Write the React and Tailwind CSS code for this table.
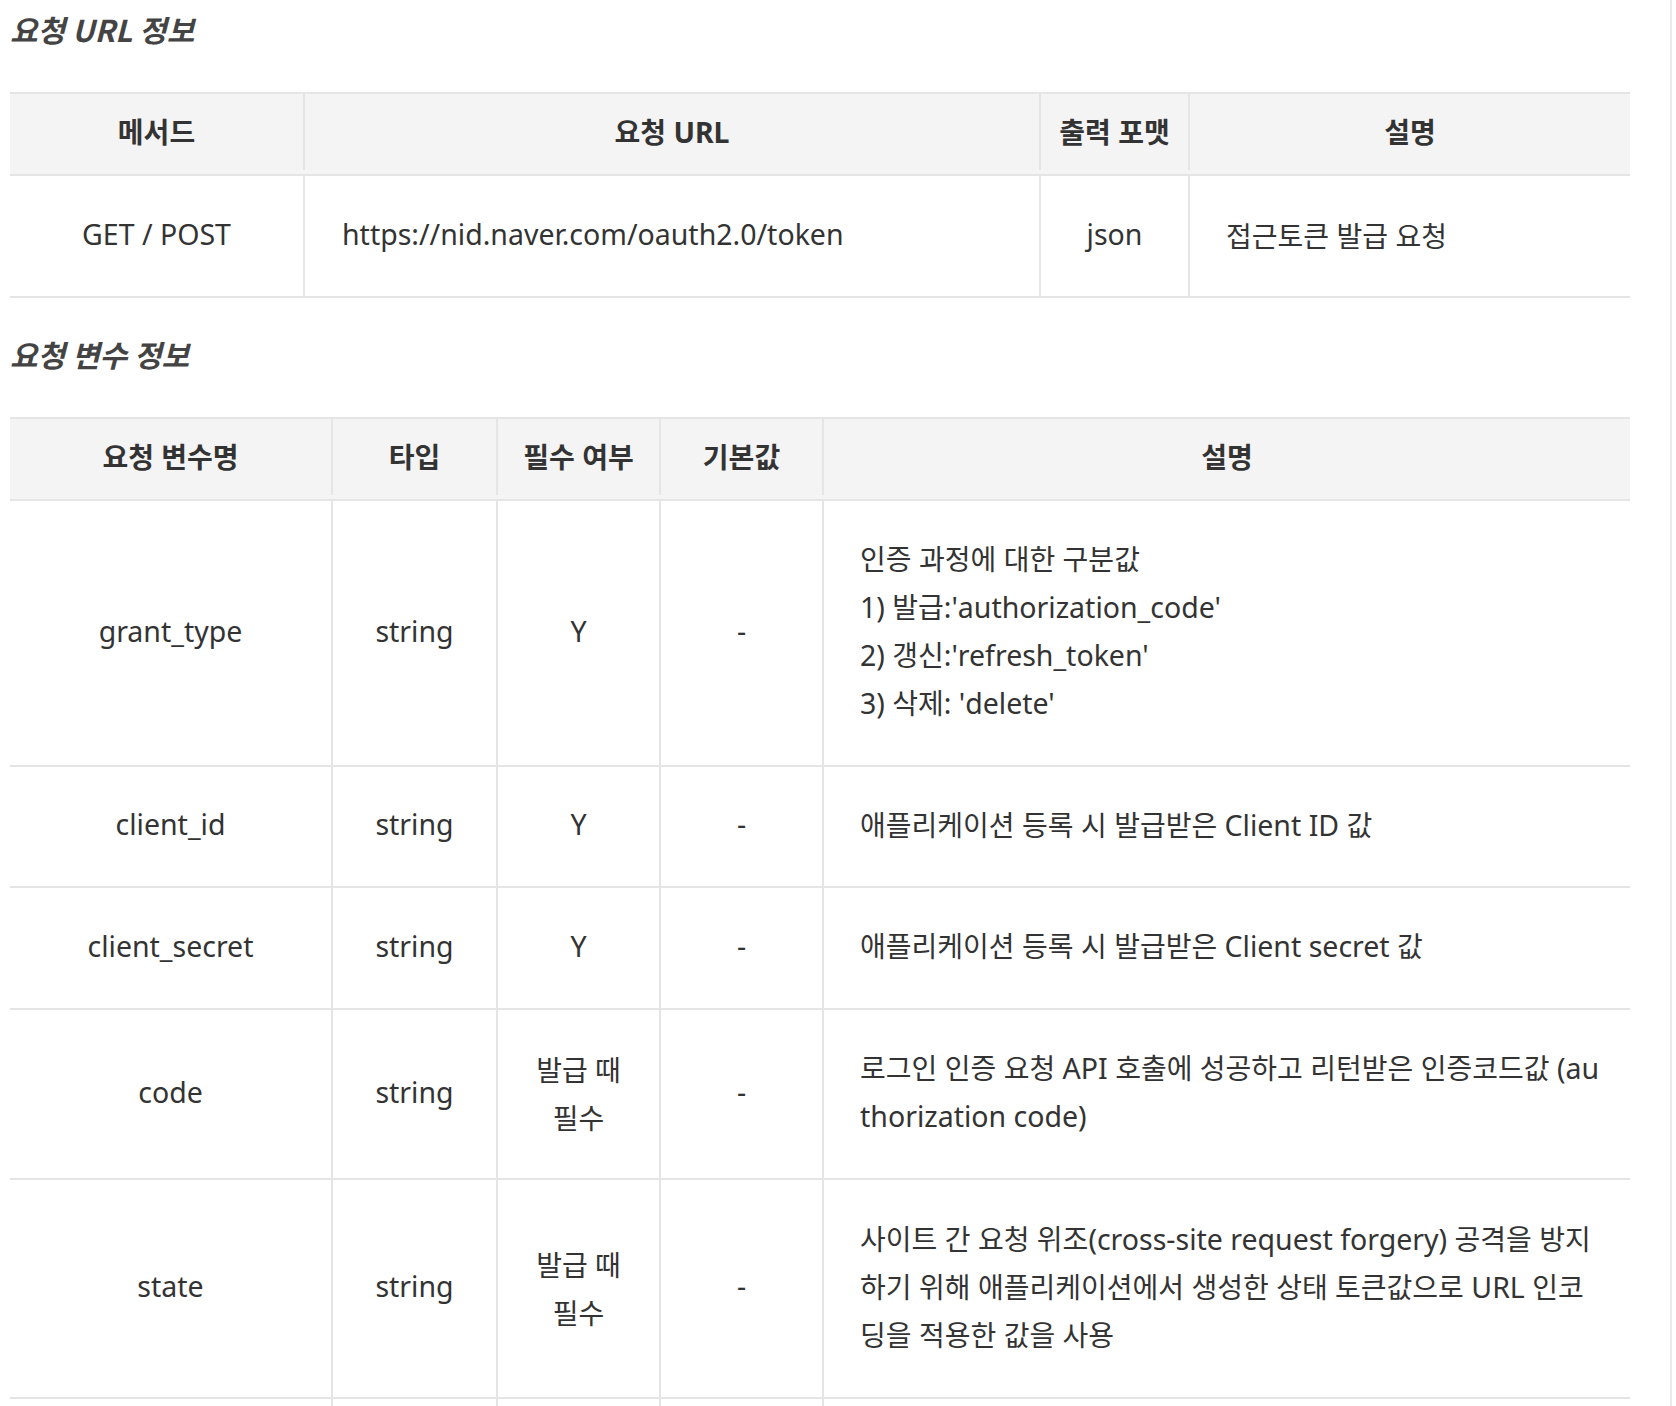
const HANGUL = /([\uAC00-\uD7A3]+)/;

// Hangul runs are set a little smaller than the latin text around them
function Txt({ text, ko = 'text-[28px]' }) {
  return (
    <span>
      {text.split(HANGUL).map((part, i) =>
        HANGUL.test(part) ? (
          <span key={i} className={ko}>
            {part}
          </span>
        ) : (
          part
        )
      )}
    </span>
  );
}

function Lines({ lines }) {
  return (
    <div className="whitespace-nowrap">
      {lines.map((l, i) => (
        <div key={i}>
          <Txt text={l} />
        </div>
      ))}
    </div>
  );
}

const urlRows = [['GET / POST', 'https://nid.naver.com/oauth2.0/token', 'json', '접근토큰 발급 요청']];

const paramRows = [
  {
    h: 'h-[266px]',
    name: 'grant_type',
    req: ['Y'],
    desc: [
      '인증 과정에 대한 구분값',
      "1) 발급:'authorization_code'",
      "2) 갱신:'refresh_token'",
      "3) 삭제: 'delete'",
    ],
  },
  { h: 'h-[121px]', name: 'client_id', req: ['Y'], desc: ['애플리케이션 등록 시 발급받은 Client ID 값'] },
  { h: 'h-[122px]', name: 'client_secret', req: ['Y'], desc: ['애플리케이션 등록 시 발급받은 Client secret 값'] },
  {
    h: 'h-[170px]',
    name: 'code',
    req: ['발급 때', '필수'],
    desc: ['로그인 인증 요청 API 호출에 성공하고 리턴받은 인증코드값 (au', 'thorization code)'],
  },
  {
    h: 'h-[219px]',
    name: 'state',
    req: ['발급 때', '필수'],
    desc: [
      '사이트 간 요청 위조(cross-site request forgery) 공격을 방지',
      '하기 위해 애플리케이션에서 생성한 상태 토큰값으로 URL 인코',
      '딩을 적용한 값을 사용',
    ],
  },
];

function Title({ children, className = '' }) {
  return (
    <h3
      className={`font-['Noto_Sans_CJK_KR',sans-serif] text-[30px] leading-[42px] font-bold italic text-[#444] ${className}`}
    >
      {children}
    </h3>
  );
}

const cell = 'flex items-center border-r-2 border-[#e5e5e5]';

export default function App() {
  return (
    <div className="min-h-screen w-[1672px] border-r-2 border-[#ebebeb] bg-white pl-[10px] pt-[8px] font-['Noto_Sans','Noto_Sans_CJK_KR',sans-serif] text-[28.5px] leading-[48px] text-[#333]">
      <Title>요청 URL 정보</Title>

      <div className="mt-[42px] w-[1620px] border-t-2 border-[#e5e5e5]">
        <div className="grid h-[82px] grid-cols-[295px_736px_149px_1fr] border-b-2 border-[#e5e5e5] bg-[#f4f4f4] pb-[4px] font-bold">
          <div className={`${cell} justify-center`}><Txt text="메서드" /></div>
          <div className={`${cell} justify-center`}><Txt text="요청 URL" /></div>
          <div className={`${cell} justify-center`}><Txt text="출력 포맷" /></div>
          <div className="flex items-center justify-center"><Txt text="설명" /></div>
        </div>
        {urlRows.map((r) => (
          <div key={r[1]} className="grid h-[122px] grid-cols-[295px_736px_149px_1fr] border-b-2 border-[#e5e5e5]">
            <div className={`${cell} justify-center pb-[5px]`}>{r[0]}</div>
            <div className={`${cell} pb-[5px] pl-[37px]`}>{r[1]}</div>
            <div className={`${cell} justify-center pb-[5px]`}>{r[2]}</div>
            <div className="flex items-center pl-[36px]"><Txt text={r[3]} /></div>
          </div>
        ))}
      </div>

      <Title className="mt-[35px]">요청 변수 정보</Title>

      <div className="mt-[42px] w-[1620px] border-t-2 border-[#e5e5e5]">
        <div className="grid h-[82px] grid-cols-[323px_165px_163px_163px_1fr] border-b-2 border-[#e5e5e5] bg-[#f4f4f4] pb-[4px] font-bold">
          <div className={`${cell} justify-center`}><Txt text="요청 변수명" /></div>
          <div className={`${cell} justify-center`}><Txt text="타입" /></div>
          <div className={`${cell} justify-center`}><Txt text="필수 여부" /></div>
          <div className={`${cell} justify-center`}><Txt text="기본값" /></div>
          <div className="flex items-center justify-center"><Txt text="설명" /></div>
        </div>
        {paramRows.map((r) => (
          <div key={r.name} className={`grid grid-cols-[323px_165px_163px_163px_1fr] border-b-2 border-[#e5e5e5] ${r.h}`}>
            <div className={`${cell} justify-center pb-[5px]`}>{r.name}</div>
            <div className={`${cell} justify-center pb-[5px]`}>string</div>
            <div className={`${cell} justify-center text-center`}>
              <div className={r.req.length === 1 ? 'pb-[5px]' : ''}>
                {r.req.map((t) => (
                  <div key={t}><Txt text={t} /></div>
                ))}
              </div>
            </div>
            <div className={`${cell} justify-center pb-[5px]`}>-</div>
            <div className="flex items-center pb-[4px] pl-[36px]">
              <Lines lines={r.desc} />
            </div>
          </div>
        ))}
        <div className="grid h-[150px] grid-cols-[323px_165px_163px_163px_1fr] border-b-2 border-[#e5e5e5]">
          <div className={cell} />
          <div className={cell} />
          <div className={cell} />
          <div className={cell} />
          <div />
        </div>
      </div>
    </div>
  );
}
